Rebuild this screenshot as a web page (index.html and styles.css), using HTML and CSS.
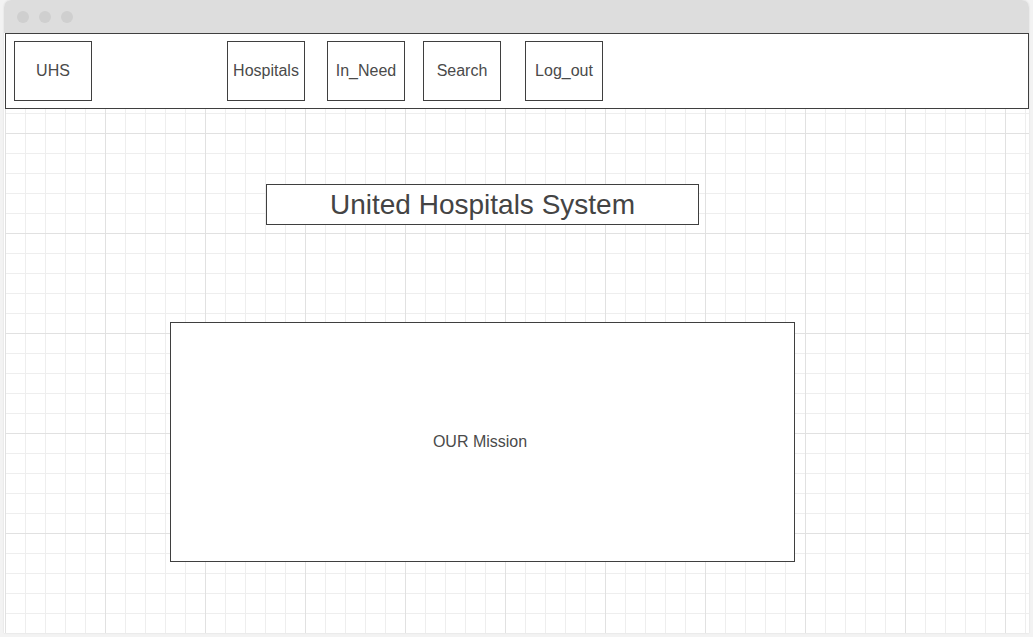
FILE: index.html
```html
<!DOCTYPE html>
<html>
<head>
<meta charset="utf-8">
<link rel="stylesheet" href="styles.css">
</head>
<body>
<div class="window">
  <div class="titlebar">
    <span class="dot"></span><span class="dot"></span><span class="dot"></span>
  </div>
  <div class="canvas">
    <nav class="nav">
      <div class="btn btn-uhs">UHS</div>
      <div class="btn btn-hosp">Hospitals</div>
      <div class="btn btn-need">In_Need</div>
      <div class="btn btn-search">Search</div>
      <div class="btn btn-logout">Log_out</div>
    </nav>
    <div class="title">United Hospitals System</div>
    <div class="mission">OUR Mission</div>
  </div>
</div>
</body>
</html>
```
FILE: styles.css
```css
* { box-sizing: border-box; }
html, body { margin: 0; padding: 0; }
body {
  background: #f3f3f3;
  width: 1033px;
  height: 637px;
  overflow: hidden;
  font-family: "Liberation Sans", Arial, sans-serif;
  color: #444;
}
.window {
  margin-left: 4px;
  width: 1025px;
  height: 633px;
  display: flex;
  flex-direction: column;
  box-shadow: 0 0 2px rgba(0,0,0,0.12);
  border-radius: 7px 7px 0 0;
  background: #fff;
}
.titlebar {
  height: 33px;
  background: #dddddd;
  border-radius: 7px 7px 0 0;
  display: flex;
  align-items: center;
  padding-left: 13px;
  gap: 10px;
}
.dot {
  width: 12px;
  height: 12px;
  border-radius: 50%;
  background: #cfcfcf;
}
.canvas {
  margin-left: 1px;
  height: 600px;
  background-color: #fff;
  background-image:
    linear-gradient(to right, #e1e1e1 1px, transparent 1px),
    linear-gradient(to bottom, #e1e1e1 1px, transparent 1px),
    linear-gradient(to right, #eeeeee 1px, transparent 1px),
    linear-gradient(to bottom, #eeeeee 1px, transparent 1px);
  background-size: 100px 100px, 100px 100px, 20px 20px, 20px 20px;
  display: flex;
  flex-direction: column;
  align-items: flex-start;
}
.nav {
  width: 1024px;
  height: 76px;
  border: 1px solid #3f3f3f;
  background: #fff;
  padding: 7px 0 7px 8px;
  display: flex;
  align-items: stretch;
}
.btn {
  width: 78px;
  height: 60px;
  border: 1px solid #3f3f3f;
  display: flex;
  align-items: center;
  justify-content: center;
  font-size: 16px;
  color: #4a4a4a;
}
.btn-hosp { margin-left: 135px; }
.btn-need { margin-left: 22px; }
.btn-search { margin-left: 18px; }
.btn-logout { margin-left: 24px; }
.title {
  margin-top: 75px;
  margin-left: 261px;
  width: 433px;
  height: 41px;
  border: 1px solid #3f3f3f;
  background: #fff;
  display: flex;
  align-items: center;
  justify-content: center;
  font-size: 28px;
  color: #444;
}
.mission {
  margin-top: 97px;
  margin-left: 165px;
  width: 625px;
  height: 240px;
  border: 1px solid #3f3f3f;
  background: #fff;
  display: flex;
  align-items: center;
  justify-content: center;
  font-size: 16px;
  color: #4a4a4a;
  padding-right: 5px;
}
```
